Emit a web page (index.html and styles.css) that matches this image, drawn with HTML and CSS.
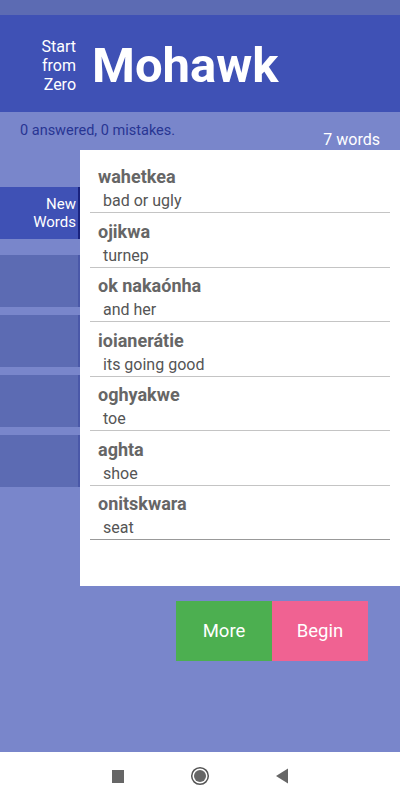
FILE: index.html
```html
<!DOCTYPE html>
<html lang="en">
<head>
  <meta charset="UTF-8">
  <meta name="viewport" content="width=device-width, initial-scale=1.0">
  <title>Start from Zero - Mohawk</title>
  <link rel="stylesheet" href="styles.css">
</head>
<body>
  <div class="screen">
    <div class="status"></div>
    <div class="header">
      <div class="tagline">Start<br>from<br>Zero</div>
      <div class="title">Mohawk</div>
    </div>
    <div class="main">
      <div class="stats">
        <div class="progress">0 answered, 0 mistakes.</div>
        <div class="count">7 words</div>
      </div>
      <div class="body">
        <div class="tabs">
          <div class="tab active">New<br>Words</div>
          <div class="tab"></div>
          <div class="tab"></div>
          <div class="tab"></div>
          <div class="tab"></div>
        </div>
        <div class="panel">
          <div class="item"><div class="word">wahetkea</div><div class="meaning">bad or ugly</div></div>
          <div class="item"><div class="word">ojikwa</div><div class="meaning">turnep</div></div>
          <div class="item"><div class="word">ok nakaónha</div><div class="meaning">and her</div></div>
          <div class="item"><div class="word">ioianerátie</div><div class="meaning">its going good</div></div>
          <div class="item"><div class="word">oghyakwe</div><div class="meaning">toe</div></div>
          <div class="item"><div class="word">aghta</div><div class="meaning">shoe</div></div>
          <div class="item"><div class="word">onitskwara</div><div class="meaning">seat</div></div>
        </div>
      </div>
      <div class="actions">
        <div class="btn more">More</div>
        <div class="btn begin">Begin</div>
      </div>
    </div>
    <div class="navbar">
      <svg width="14" height="14" viewBox="0 0 14 14"><rect x="1" y="1" width="12" height="13" fill="#666"/></svg>
      <svg width="20" height="20" viewBox="0 0 20 20"><circle cx="10" cy="10" r="8.3" fill="none" stroke="#555" stroke-width="1.5"/><circle cx="10" cy="10" r="6" fill="#666"/></svg>
      <svg width="14" height="16" viewBox="0 0 14 16"><polygon points="13,0.5 13,15.5 1,8" fill="#666"/></svg>
    </div>
  </div>
</body>
</html>
```

FILE: styles.css
```css
body {
  margin: 0;
  font-family: Roboto, "Liberation Sans", sans-serif;
}
.screen {
  width: 400px;
  height: 800px;
  display: flex;
  flex-direction: column;
  overflow: hidden;
}
.status {
  height: 15px;
  background: #5c6bb3;
}
.header {
  height: 97px;
  background: #3f51b5;
  display: flex;
  align-items: center;
  gap: 16px;
  color: white;
}
.tagline {
  width: 76px;
  text-align: right;
  font-size: 16px;
  line-height: 19px;
  margin-top: 3px;
}
.title {
  font-size: 49px;
  font-weight: bold;
  line-height: 56px;
  margin-top: 4px;
}
.main {
  flex: 1;
  background: #7986cb;
  display: flex;
  flex-direction: column;
}
.stats {
  height: 38px;
  display: flex;
  justify-content: space-between;
  align-items: flex-end;
  padding: 0 20px;
}
.progress {
  align-self: flex-start;
  padding-top: 9px;
  font-size: 14.5px;
  line-height: 20px;
  color: #283593;
}
.count {
  font-size: 16px;
  line-height: 20px;
  color: white;
}
.body {
  display: flex;
  height: 436px;
}
.tabs {
  width: 80px;
  padding-top: 37px;
  display: flex;
  flex-direction: column;
  gap: 8px;
}
.tab {
  height: 52px;
  box-sizing: border-box;
  background: #5c6bb3;
  border-right: 2px solid #4a58a8;
}
.tab.active {
  background: #3f51b5;
  border-right-color: #1a237e;
  margin-bottom: 8px;
  color: white;
  font-size: 15px;
  line-height: 18px;
  text-align: right;
  padding: 8px 2px 0 0;
}
.panel {
  flex: 1;
  background: white;
  padding: 8.5px 10px 0 10px;
}
.item {
  padding-top: 5.5px;
  border-bottom: 1px solid #c4c4c4;
}
.item:last-child {
  border-bottom-color: #999;
}
.word {
  padding-left: 8px;
  font-size: 18px;
  font-weight: bold;
  line-height: 25px;
  color: #666;
}
.meaning {
  padding-left: 13px;
  font-size: 16px;
  line-height: 23px;
  color: #555;
}
.actions {
  display: flex;
  justify-content: flex-end;
  padding: 15px 32px 0 0;
}
.btn {
  width: 96px;
  height: 60px;
  display: flex;
  align-items: center;
  justify-content: center;
  color: white;
  font-size: 18.5px;
}
.more {
  background: #4caf50;
}
.begin {
  background: #f06292;
}
.navbar {
  height: 48px;
  background: white;
  display: flex;
  align-items: center;
  justify-content: center;
  gap: 65px;
}
```
